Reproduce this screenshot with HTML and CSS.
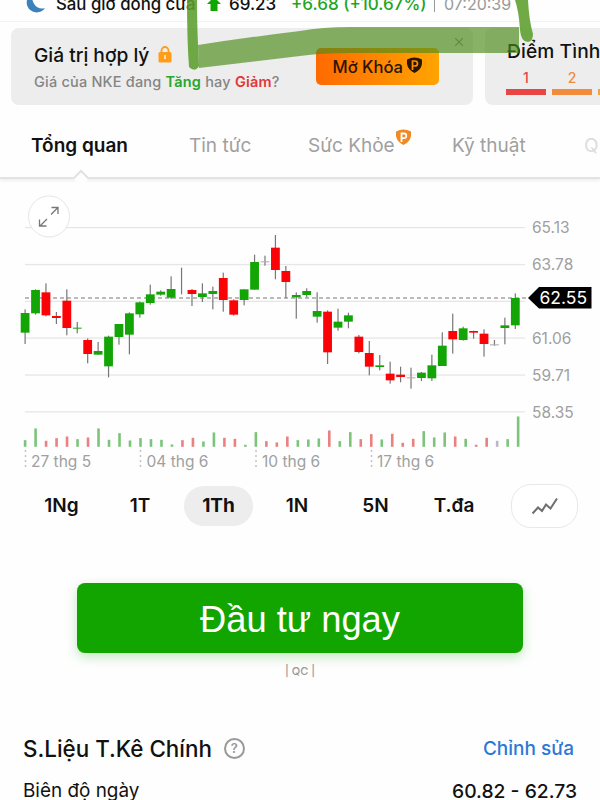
FILE: index.html
```html
<!DOCTYPE html>
<html lang="vi">

<head>
    <meta charset="utf-8">
    <title>NKE</title>
    <link rel="stylesheet" href="styles.css">
</head>

<body>
    <header class="after-hours">
        <svg class="moon" width="20" height="20" viewBox="0 0 20 20">
            <path d="M5 1A10 10 0 1 0 20 14A9.500 9.500 0 0 1 9 0Z" fill="#3b82bd" />
        </svg>
        <span class="label">Sau giờ đóng cửa</span>
        <svg class="up" width="14" height="14" viewBox="0 0 14 14">
            <path d="M7 0L14 7H10.500V14H3.500V7H0Z" fill="#0ea600" />
        </svg>
        <span class="price">69.23</span>
        <span class="change">+6.68 (+10.67%)</span>
        <span class="time"><i></i>07:20:39</span>
    </header>

    <section class="cards">
        <div class="card fair">
            <div class="fair-text">
                <h2>Giá trị hợp lý
                    <svg width="14" height="17" viewBox="0 0 14 17">
                        <path d="M3.500 7V4.500a3.500 3.500 0 0 1 7 0V7" fill="none" stroke="#ff9c1a" stroke-width="1.800" />
                        <rect x="0.500" y="6" width="13" height="10.500" rx="1.500" fill="#ff9c1a" />
                        <path d="M7 9v4" stroke="#fff0d8" stroke-width="1.500" />
                    </svg>
                </h2>
                <p>Giá của NKE đang <b class="green">Tăng</b> hay <b class="red">Giảm</b>?</p>
            </div>
            <button class="unlock">Mở Khóa
                <svg width="15" height="16" viewBox="0 0 15 16">
                    <path d="M0 2.500Q7.500-1.500 15 2.500V7Q14 13 7.500 16Q1 13 0 7Z" fill="#2a1505" />
                    <path d="M5.500 13V4h2.500a2.500 2.500 0 0 1 0 5H5.500" fill="none" stroke="#ff9000" stroke-width="1.700" />
                </svg>
            </button>
            <svg class="close" width="8" height="8" viewBox="0 0 8 8">
                <path d="M0 0L8 8M8 0L0 8" stroke="#8a8a8a" stroke-width="1.200" />
            </svg>
        </div>
        <div class="card health">
            <h2>Điểm Tình</h2>
            <ol>
                <li class="one">1</li>
                <li class="two">2</li>
                <li class="three"></li>
            </ol>
        </div>
    </section>

    <nav class="tabs">
        <a class="active">Tổng quan</a>
        <a>Tin tức</a>
        <a class="locked">Sức Khỏe<svg class="pro" width="15" height="16" viewBox="0 0 15 16">
                <path d="M0 2.500Q7.500-1.500 15 2.500V7Q14 13 7.500 16Q1 13 0 7Z" fill="#f08a24" />
                <path d="M5.500 13V4.500h2.500a2.300 2.300 0 0 1 0 4.600H5.500" fill="none" stroke="#fff" stroke-width="1.800" />
            </svg></a>
        <a>Kỹ thuật</a>
        <a class="faded">Q</a>
    </nav>

    <svg class="chart" width="600" height="294" viewBox="0 181 600 294">
        <g id="grid"></g>
        <path class="dash" d="M25 298H526" />
        <g id="candles"></g>
        <g id="volume"></g>
        <g class="axis">
            <text x="532" y="233">65.13</text>
            <text x="532" y="270">63.78</text>
            <text x="532" y="344">61.06</text>
            <text x="532" y="381">59.71</text>
            <text x="532" y="418">58.35</text>
        </g>
        <path d="M528 298L539 287H591.500V308.500H539Z" />
        <text class="last" x="539.500" y="304">62.55</text>
        <g class="dates">
            <path d="M25.500 450V470M140.500 450V470M256 450V470M371.500 450V470" />
            <text x="31" y="467">27 thg 5</text>
            <text x="146.500" y="467">04 thg 6</text>
            <text x="262" y="467">10 thg 6</text>
            <text x="377" y="467">17 thg 6</text>
        </g>
        <circle cx="49" cy="216.500" r="20.500" fill="#fff" stroke="#e6e6e6" />
        <path d="M51 214.500L58 207.500M51.500 207.500H58V214M47 219L40 226M39.500 219.500V226H46.500" fill="none" stroke="#777" stroke-width="1.300" />
    </svg>

    <div class="ranges">
        <span>1Ng</span>
        <span>1T</span>
        <span class="active">1Th</span>
        <span>1N</span>
        <span>5N</span>
        <span>T.đa</span>
        <button class="type">
            <svg width="28" height="20" viewBox="0 0 28 20">
                <path d="M1.500 17.500L7 11.500L11 15L15 8.500L19.500 12.500L26 2.500" fill="none" stroke="#6e6e6e" stroke-width="2" />
            </svg>
        </button>
    </div>

    <button class="invest">Đầu tư ngay</button>
    <p class="ad">| QC |</p>

    <section class="stats">
        <div class="head">
            <h3>S.Liệu T.Kê Chính</h3>
            <span class="help">?</span>
            <a class="edit">Chỉnh sửa</a>
        </div>
        <div class="row">
            <span>Biên độ ngày</span>
            <b>60.82 - 62.73</b>
        </div>
    </section>

    <!-- marker strokes drawn over the quote -->
    <svg class="marker" width="600" height="80" viewBox="0 0 600 80">
        <path d="M198 45Q250 37 300 31Q322 27 350 27H519V53H350Q320 53 300 56L199 68Z" fill="#4a8c18" opacity="0.660" />
        <path d="M187 0H197Q197 30 199 66Q195 73 189 67Q187 40 187 0Z" fill="#5b9e2c" opacity="0.880" />
        <path d="M515 0H528Q529 20 533 34Q533 41 528 42Q521 42 520 30Q519 12 515 0Z" fill="#5b9e2c" opacity="0.880" />
    </svg>

    <script>
        const svgNS = 'http://www.w3.org/2000/svg';
        const colors = { g: '#12a505', r: '#fb0207', n: '#b5a9a9' };
        const volumeColors = { g: '#7cc47a', r: '#ea8080', n: '#b9b9c4' };

        // color, high, top, bottom, low (thirds of a pixel below y = 220)
        const candles = [
            ['g', 268, 279, 338, 372], ['g', 208, 210, 280, 284], ['r', 190, 217, 286, 289], ['r', 276, 288, 294, 312],
            ['r', 208, 242, 324, 346], ['g', 306, 323, 326, 340], ['r', 355, 360, 402, 430], ['g', 366, 393, 404, 404],
            ['g', 347, 350, 439, 472], ['g', 312, 312, 351, 374], ['g', 277, 280, 344, 403], ['g', 245, 247, 283, 293],
            ['g', 194, 223, 249, 254], ['g', 211, 215, 224, 227], ['g', 169, 207, 233, 237], ['n', 143, 222, 222, 223],
            ['r', 207, 210, 222, 258], ['g', 190, 220, 231, 246], ['g', 200, 213, 222, 268], ['r', 158, 174, 240, 275],
            ['r', 238, 241, 284, 287], ['g', 208, 208, 240, 256], ['g', 104, 126, 209, 209], ['n', 107, 124, 127, 137],
            ['r', 45, 83, 150, 178], ['r', 138, 153, 186, 234], ['g', 217, 225, 232, 296], ['g', 205, 213, 225, 232],
            ['g', 217, 273, 290, 308], ['r', 271, 275, 397, 432], ['g', 266, 305, 323, 332], ['g', 278, 286, 305, 325],
            ['r', 345, 350, 396, 400], ['r', 363, 399, 440, 466], ['g', 405, 436, 441, 451], ['r', 425, 461, 481, 491],
            ['r', 440, 464, 471, 487], ['n', 443, 472, 475, 506], ['g', 456, 458, 474, 483], ['g', 404, 436, 475, 483],
            ['g', 337, 377, 438, 438], ['r', 281, 333, 358, 401], ['g', 320, 325, 360, 362], ['r', 332, 333, 338, 356],
            ['r', 328, 341, 372, 410], ['n', 360, 373, 376, 377], ['g', 293, 316, 324, 373], ['g', 220, 234, 316, 327]
        ];

        const volume = 'g20 g55 r18 r26 r31 g23 r28 g55 g21 g41 g19 g26 g23 g21 g7 r20 r27 g16 g43 r27 r24 g6 g44 r17 r13 r31 g20 g22 g25 r49 g17 g44 r23 r38 g22 r39 r12 r24 g47 g28 g43 r31 g24 r6 r27 n18 g23 g91'.split(' ');

        const rect = (parent, x, y, width, height, fill) => {
            const el = document.createElementNS(svgNS, 'rect');
            Object.entries({ x, y, width, height, fill }).forEach(([k, v]) => el.setAttribute(k, v));
            document.getElementById(parent).appendChild(el);
        }

        [227.5, 264.5, 301.3, 338, 375, 411.8].forEach(y => rect('grid', 25, y - 0.6, 500, 1.3, '#e6e6e6'));

        candles.forEach(([c, high, top, bottom, low], i) => {
            const x = 25.1 + i * 10.43;
            rect('candles', x - 0.6, 220 + high / 3, 1.2, (low - high) / 3, '#777');
            rect('candles', x - 4.4, 220 + top / 3, 8.8, (bottom - top) / 3, colors[c]);
        });

        volume.forEach((v, i) => {
            const h = v.slice(1) / 3;
            rect('volume', 23.8 + i * 10.49, 446.8 - h, 2.6, h, volumeColors[v[0]]);
        });
    </script>
</body>

</html>
```

FILE: styles.css
```css
* {
    box-sizing: border-box;
}

body {
    position: relative;
    width: 600px;
    height: 800px;
    margin: 0;
    overflow: hidden;
    background: #fefefe;
    color: #111;
    font-family: Inter, "Liberation Sans", sans-serif;
}

h2, h3, p, ol {
    margin: 0;
    padding: 0;
    font-weight: 500;
}

button {
    border: 0;
    padding: 0;
    font-family: inherit;
}

.after-hours {
    display: flex;
    align-items: center;
    height: 22px;
    padding: 0 0 14px 25px;
    border-bottom: 1px solid #f2f2f2;
    font-size: 17px;
    font-weight: 500;
    line-height: 20px;
    white-space: nowrap;
}

.moon {
    flex: none;
    margin-right: 11px;
}

.label {
    width: 151px;
    font-size: 16.8px;
}

.up {
    flex: none;
    margin-right: 8px;
}

.price {
    width: 62px;
}

.change {
    width: 143px;
    color: #1ea51e;
}

.time {
    display: flex;
    align-items: center;
    color: #999;
    font-weight: 400;
    font-size: 16px;
}

.time i {
    width: 1px;
    height: 16px;
    margin-right: 9px;
    background: #999;
}

.cards {
    display: flex;
    gap: 12px;
    padding: 6px 0 0 11px;
}

.card {
    flex: none;
    height: 77px;
    border-radius: 8px;
    background: #ededed;
}

.card h2 {
    font-size: 19.2px;
    line-height: 26px;
    white-space: nowrap;
}

.fair {
    position: relative;
    display: flex;
    width: 462px;
    padding: 14px 0 0 23px;
}

.fair-text {
    width: 282px;
}

.fair-text svg {
    margin-left: 3px;
    vertical-align: -1px;
}

.fair p {
    margin-top: 4px;
    color: #858585;
    font-size: 14.5px;
    letter-spacing: 0.2px;
    line-height: 20px;
}

.fair b {
    font-weight: 600;
}

.fair .green {
    color: #2ba52b;
}

.fair .red {
    color: #e03838;
}

.unlock {
    width: 123px;
    height: 37px;
    margin-top: 6px;
    border-radius: 5px;
    background: linear-gradient(90deg, #ff6a00, #ffa400);
    color: #2a1505;
    font-size: 16.6px;
    font-weight: 500;
}

.close {
    position: absolute;
    top: 10px;
    right: 10px;
}

.health {
    width: 115px;
    overflow: hidden;
    padding: 10px 0 0 21px;
    border-radius: 8px 0 0 8px;
}

.health h2 {
    margin-left: 1px;
    letter-spacing: 0.1px;
}

.health ol {
    display: flex;
    gap: 6px;
    margin-top: 5px;
    list-style: none;
}

.health li {
    flex: none;
    width: 40px;
    height: 26px;
    border-bottom: 6px solid;
    font-size: 14px;
    line-height: 18px;
    text-align: center;
}

.health .one {
    color: #e94545;
}

.health .two {
    color: #f28b3c;
}

.health .three {
    color: #f2a33c;
}

.tabs {
    position: relative;
    display: grid;
    grid-template-columns: 158px 119px 144px 132px 16px;
    height: 74px;
    padding: 28px 0 0 31px;
    border-bottom: 2px solid #e2e2e2;
    box-shadow: 0 2px 3px #f0f0f0;
    color: #a0a0a0;
    font-size: 19px;
    line-height: 26px;
    white-space: nowrap;
}

.tabs .active {
    color: #111;
    font-weight: 600;
}

/* little notch under the active tab */
.tabs .active:after {
    position: absolute;
    left: 75px;
    bottom: -7px;
    content: "";
    width: 10px;
    height: 10px;
    border: solid #e2e2e2;
    border-width: 2px 0 0 2px;
    background: #fefefe;
    transform: rotate(45deg);
}

.tabs .faded {
    color: #dcdcdc;
}

.locked {
    position: relative;
}

.pro {
    position: absolute;
    top: -4px;
    left: 88px;
}

.chart {
    display: block;
    margin-top: 2px;
    position: relative;
}

.chart text {
    font-size: 15.5px;
    fill: #a0a0a0;
}

.chart .axis text {
    font-size: 15.5px;
}

.chart .last {
    font-size: 17.5px;
    fill: #fff;
}

.dash {
    stroke: #777;
    stroke-width: 1;
    stroke-dasharray: 4 3;
}

.dates path {
    stroke: #c4c4c4;
    stroke-width: 1.5;
    stroke-dasharray: 2 3;
}

.ranges {
    display: flex;
    align-items: center;
    height: 44px;
    margin-top: 9px;
    padding-left: 27px;
    font-size: 19px;
    font-weight: 600;
}

.ranges span {
    width: 69px;
    height: 40px;
    margin-right: 9.5px;
    border-radius: 20px;
    line-height: 40px;
    text-align: center;
}

.ranges .active {
    background: #ededed;
    font-weight: 700;
}

.type {
    display: flex;
    align-items: center;
    justify-content: center;
    width: 67px;
    height: 44px;
    margin-left: 13px;
    border: 1px solid #e8e8e8;
    border-radius: 20px;
    background: #fff;
}

.invest {
    display: block;
    width: 446px;
    height: 70px;
    margin: 55px 0 0 77px;
    padding-top: 3px;
    border-radius: 8px;
    background: #12a500;
    box-shadow: 0 4px 12px rgba(18, 165, 0, 0.25);
    color: #fff;
    font-family: "Liberation Sans", sans-serif;
    font-size: 36.3px;
}

.ad {
    margin-top: 11px;
    color: #999;
    font-size: 11px;
    line-height: 14px;
    text-align: center;
}

.stats {
    padding: 56px 23px 0;
}

.head {
    display: flex;
    align-items: center;
    height: 28px;
}

.head h3 {
    font-size: 22.4px;
}

.help {
    width: 21px;
    height: 21px;
    margin-left: 12px;
    border: 2px solid #999;
    border-radius: 50%;
    color: #999;
    font-size: 13px;
    font-weight: 600;
    line-height: 17px;
    text-align: center;
}

.edit {
    margin-left: auto;
    padding-right: 3px;
    color: #2d78d6;
    font-size: 19px;
    font-weight: 500;
}

.row {
    display: flex;
    justify-content: space-between;
    margin-top: 16px;
    font-size: 18.9px;
    line-height: 26px;
}

.row b {
    font-size: 19.3px;
    font-weight: 500;
}

.marker {
    position: absolute;
    top: 0;
    left: 0;
}
```
